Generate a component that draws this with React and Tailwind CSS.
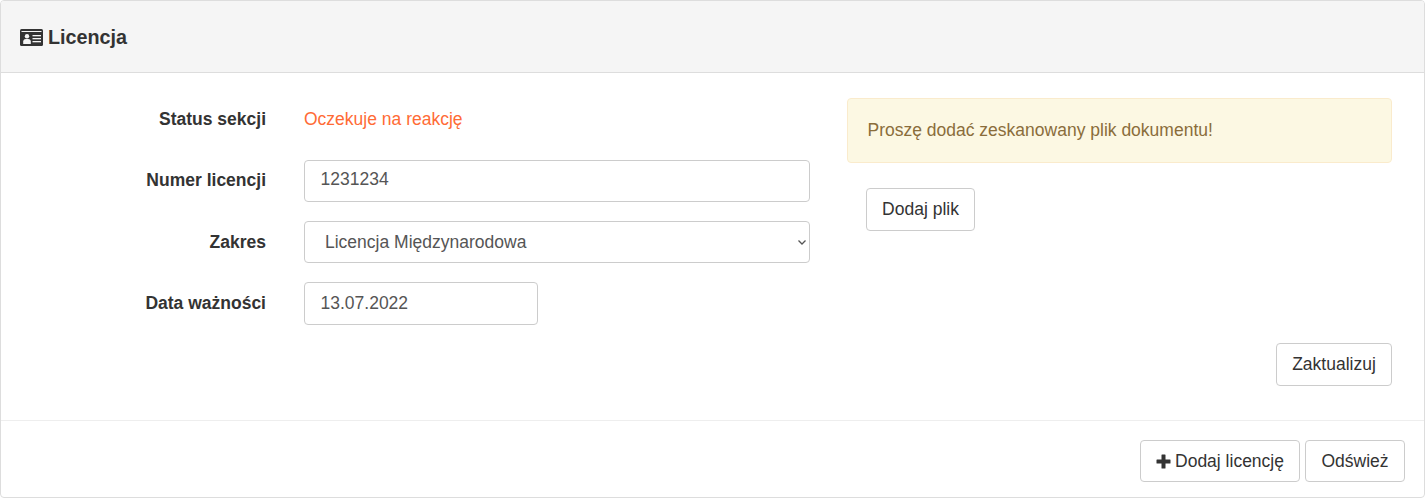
import React from "react";

const btn = "inline-flex items-center justify-center bg-white border border-[#cccccc] rounded-[4px] text-[17.5px] text-[#333333]";
const label = "w-[265px] shrink-0 text-right font-bold text-[17.5px] text-[#333333]";
const control = "block h-full bg-white border border-[#cccccc] rounded-[4px] text-[17.5px] text-[#555555] outline-none";

function CardIcon() {
  return (
    <svg viewBox="0 0 23 17" className="w-[23px] h-[17px] shrink-0">
      <rect x="0" y="0" width="23" height="17" rx="1.5" fill="#333333" />
      <rect x="1.5" y="2" width="20" height="1" fill="#f5f5f5" />
      <circle cx="7" cy="7.2" r="2.2" fill="#f5f5f5" />
      <path d="M3.2 15 V12.6 C3.2 10.8 4.6 10 5.8 10 H8.2 C9.4 10 10.8 10.8 10.8 12.6 V15 Z" fill="#f5f5f5" />
      <rect x="12.5" y="6" width="8.5" height="1.3" fill="#f5f5f5" />
      <rect x="12.5" y="9" width="8.5" height="1.3" fill="#f5f5f5" />
      <rect x="12.5" y="12" width="8.5" height="1.3" fill="#f5f5f5" />
    </svg>
  );
}

export default function App() {
  return (
    <div className="w-[1425px] h-[498px] bg-white border border-[#dddddd] rounded-[4px] overflow-hidden font-['Liberation_Sans',Arial,sans-serif]">
      <div className="h-[72px] bg-[#f5f5f5] border-b border-[#dddddd] flex items-center pl-[19px] pt-[2px] gap-[5px]">
        <CardIcon />
        <span className="text-[19.75px] font-bold text-[#333333]">Licencja</span>
      </div>
      <div className="pt-[25px] pr-[32px] h-[348px] border-b border-[#eeeeee]">
        <div className="flex">
          <div className="w-[809px] shrink-0 flex flex-col">
            <div className="flex items-center h-[42px] mb-[20px]">
              <div className={label}>Status sekcji</div>
              <div className="ml-[38px] text-[17.5px] text-[#ff6b35]">Oczekuje na reakcję</div>
            </div>
            <div className="flex items-center h-[42px] mb-[19px]">
              <div className={`${label} pb-[2px]`}>Numer licencji</div>
              <input readOnly value="1231234" className={`${control} pl-[15.5px] pr-4 pb-[3px] ml-[38px] w-[506px]`} />
            </div>
            <div className="flex items-center h-[42px] mb-[19px]">
              <div className={label}>Zakres</div>
              <div className="relative h-full ml-[38px] w-[506px]">
                <select defaultValue="m" className={`${control} w-full pl-5 pr-8 appearance-none`}>
                  <option value="m">Licencja Międzynarodowa</option>
                </select>
                <svg viewBox="0 0 8 5" className="absolute right-[4px] top-[19px] w-[8px] h-[5px] pointer-events-none" fill="none" stroke="#555555" strokeWidth="1.3">
                  <path d="M0.5 0.5 L4 4 L7.5 0.5" />
                </svg>
              </div>
            </div>
            <div className="flex items-center h-[43px]">
              <div className={label}>Data ważności</div>
              <input readOnly value="13.07.2022" className={`${control} pl-[15.5px] pr-4 ml-[38px] w-[234px]`} />
            </div>
          </div>
          <div className="ml-[37px] flex-1">
            <div className="h-[65px] bg-[#fcf8e3] border border-[#faebcc] rounded-[4px] flex items-center pl-[19.5px] text-[17.5px] text-[#8a6d3b]">
              Proszę dodać zeskanowany plik dokumentu!
            </div>
            <button className={`${btn} mt-[25px] ml-[19px] w-[109px] h-[43px]`}>Dodaj plik</button>
          </div>
        </div>
        <div className="flex justify-end mt-[18px]">
          <button className={`${btn} w-[116px] h-[43px]`}>Zaktualizuj</button>
        </div>
      </div>
      <div className="flex justify-end gap-[5px] pt-[19px] pr-[19px]">
        <button className={`${btn} w-[160px] h-[42px] gap-[4px]`}>
          <svg viewBox="0 0 15 15" className="w-[15px] h-[15px] shrink-0" fill="#333333">
            <path d="M5.5 1 Q5.5 0.5 6 0.5 H9 Q9.5 0.5 9.5 1 V5.5 H14 Q14.5 5.5 14.5 6 V9 Q14.5 9.5 14 9.5 H9.5 V14 Q9.5 14.5 9 14.5 H6 Q5.5 14.5 5.5 14 V9.5 H1 Q0.5 9.5 0.5 9 V6 Q0.5 5.5 1 5.5 H5.5 Z" />
          </svg>
          Dodaj licencję
        </button>
        <button className={`${btn} w-[100px] h-[42px]`}>Odśwież</button>
      </div>
    </div>
  );
}
